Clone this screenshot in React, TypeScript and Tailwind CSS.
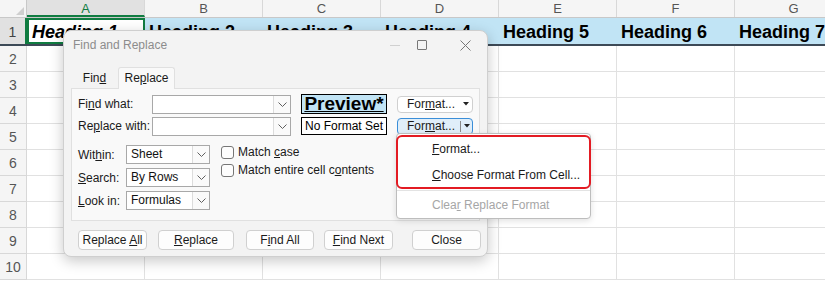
import React from "react";

const cols = ["A", "B", "C", "D", "E", "F", "G"];
const rows = [2, 3, 4, 5, 6, 7, 8, 9, 10];

const ui = { fontFamily: '"Liberation Sans", Arial, sans-serif' };
const sheet = { fontFamily: '"Liberation Sans", Arial, sans-serif' };

function Chevron() {
  return (
    <svg width="9" height="5" viewBox="0 0 9 5" fill="none">
      <polyline points="0.5,0.5 4.5,4.5 8.5,0.5" stroke="#606060" strokeWidth="1" />
    </svg>
  );
}

function Caret() {
  return (
    <svg width="6" height="4" viewBox="0 0 6 4">
      <polygon points="0,0 6,0 3,3.5" fill="#222" />
    </svg>
  );
}

function Combo({ w, value }: { w: string; value?: string }) {
  return (
    <div className={`${w} h-[19px] shrink-0 flex bg-white border border-[#a8a8a8]`}>
      <span className="flex-1 pl-[4px] text-[12px] leading-[17px] text-[#111] whitespace-nowrap">{value}</span>
      <div className="w-[17px] flex items-center justify-center border-l border-[#dcdcdc] bg-[#fafafa]">
        <Chevron />
      </div>
    </div>
  );
}

function Check({ children }: { children: React.ReactNode }) {
  return (
    <div className="flex items-center gap-[4px] h-[18px]">
      <div className="w-[13px] h-[13px] rounded-[3px] border border-[#767676] bg-[#fdfdfd]" />
      <span className="text-[12px] text-[#1a1a1a] whitespace-nowrap">{children}</span>
    </div>
  );
}

function Btn({ ml, w, children }: { ml: string; w: string; children: React.ReactNode }) {
  return (
    <div
      className={`${ml} ${w} h-[20px] flex items-center justify-center rounded-[4px] border border-[#d0d0d0] bg-[#fdfdfd] text-[12px] text-[#1a1a1a]`}
    >
      <span className="whitespace-nowrap">{children}</span>
    </div>
  );
}

export default function App() {
  return (
    <div className="relative w-[825px] h-[283px] overflow-hidden bg-white" style={ui}>
      {/* SHEET */}
      <div className="flex flex-col" style={sheet}>
        <div className="flex h-[18px] bg-[#f5f5f5] border-b border-[#c8c8c8]">
          <div className="w-[27px] shrink-0 border-r border-[#c8c8c8] flex items-end justify-end pr-[2px] pb-[2px]">
            <svg width="8" height="8" viewBox="0 0 8 8">
              <polygon points="8,0 8,8 0,8" fill="#cfcfcf" />
            </svg>
          </div>
          {cols.map((c) => (
            <div
              key={c}
              className={`w-[118px] shrink-0 border-r border-[#d8d8d8] text-center text-[13px] leading-[18px] ${
                c === "A" ? "bg-[#e1e1e1] text-[#107c41] border-b-2 border-b-[#107c41]" : "text-[#555]"
              }`}
            >
              {c}
            </div>
          ))}
        </div>

        {/* row 1 */}
        <div className="flex h-[28px] border-b-2 border-[#3d4a57]">
          <div className="w-[27px] shrink-0 bg-[#e1e1e1] border-r-2 border-[#107c41] text-center text-[14px] leading-[28px] text-[#444]">
            1
          </div>
          <div className="w-[118px] shrink-0 bg-white border-2 border-[#107c41] pl-[3px] text-[18px] font-bold italic leading-[24px] text-black">
            Heading 1
          </div>
          {[2, 3, 4, 5, 6, 7].map((n) => (
            <div
              key={n}
              className="w-[118px] shrink-0 bg-[#c1e4f5] pl-[4px] text-[18px] font-bold leading-[28px] whitespace-nowrap overflow-hidden text-black"
            >
              Heading {n}
            </div>
          ))}
        </div>

        {rows.map((r) => (
          <div key={r} className="flex h-[26px]">
            <div className="w-[27px] shrink-0 bg-[#f5f5f5] border-r border-b border-[#d8d8d8] text-center text-[14px] leading-[26px] text-[#555]">
              {r}
            </div>
            {cols.map((c) => (
              <div key={c} className="w-[118px] shrink-0 border-r border-b border-[#e1e1e1]" />
            ))}
          </div>
        ))}
      </div>

      {/* DIALOG */}
      <div className="absolute left-[63px] top-[30px] w-[425px] h-[227px] flex flex-col rounded-[8px] bg-[#f3f3f3] border border-[#cfcfcf] shadow-[0_4px_14px_rgba(0,0,0,0.22)]">
        <div className="h-[35px] flex items-start">
          <span className="pl-[9px] pt-[5px] text-[12px] text-[#8c8c8c]">Find and Replace</span>
          <div className="ml-auto flex items-center h-[28px] pr-[16px]">
            <div className="w-[10px] h-px bg-[#d0d0d0]" />
            <div className="ml-[17px] w-[10px] h-[10px] border border-[#777] rounded-[1px]" />
            <svg className="ml-[33px]" width="11" height="11" viewBox="0 0 11 11">
              <path d="M0.5 0.5 L10.5 10.5 M10.5 0.5 L0.5 10.5" stroke="#777" strokeWidth="1" />
            </svg>
          </div>
        </div>

        {/* tabs */}
        <div className="h-[22px] flex items-end pl-[7px]">
          <div className="w-[47px] h-[19px] text-center text-[12px] leading-[18px] text-[#1a1a1a]">
            Fin<u>d</u>
          </div>
          <div className="relative -mb-px z-10 w-[57px] h-[22px] bg-[#f9f9f9] border border-b-0 border-[#e0e0e0] rounded-t-[3px] text-center text-[12px] leading-[20px] text-[#1a1a1a]">
            Re<u>p</u>lace
          </div>
        </div>

        {/* panel */}
        <div className="mx-[7px] h-[133px] bg-[#f9f9f9] border border-[#e0e0e0] px-[6px] pt-[5px]">
          <div className="flex flex-col gap-[2px]">
            <div className="flex items-center h-[20px]">
              <span className="w-[74px] shrink-0 whitespace-nowrap text-[12px] text-[#1a1a1a]">
                Fi<u>n</u>d what:
              </span>
              <Combo w="w-[139px]" />
              <div className="ml-[10px] w-[86px] h-[20px] shrink-0 bg-[#c1e4f5] border border-black flex items-center justify-center overflow-hidden">
                <span
                  className="text-[19px] font-bold leading-[18px] text-black underline underline-offset-[1px]"
                  style={sheet}
                >
                  Preview*
                </span>
              </div>
              <div className="ml-[10px] w-[76px] h-[17px] shrink-0 flex items-center rounded-[4px] border border-[#d0d0d0] bg-white text-[12px] text-[#1a1a1a]">
                <span className="flex-1 text-center pl-[4px] whitespace-nowrap">
                  For<u>m</u>at...
                </span>
                <span className="w-[12px] flex justify-center">
                  <Caret />
                </span>
              </div>
            </div>
            <div className="flex items-center h-[20px]">
              <span className="w-[74px] shrink-0 whitespace-nowrap text-[12px] text-[#1a1a1a]">
                Re<u>p</u>lace with:
              </span>
              <Combo w="w-[139px]" />
              <div className="ml-[10px] w-[86px] h-[18px] shrink-0 bg-white border border-black flex items-center justify-center text-[12px] text-black whitespace-nowrap">
                No Format Set
              </div>
              <div className="ml-[10px] w-[76px] h-[17px] shrink-0 flex items-center rounded-[4px] border border-[#3a8ed8] bg-[#e0eef9] text-[12px] text-[#1a1a1a]">
                <span className="flex-1 text-center pl-[4px] whitespace-nowrap">
                  For<u>m</u>at...
                </span>
                <span className="w-px h-[11px] bg-[#8a8a8a]" />
                <span className="w-[11px] flex justify-center">
                  <Caret />
                </span>
              </div>
            </div>
          </div>

          <div className="mt-[9px] flex">
            <div className="flex flex-col gap-[4px]">
              {[
                [<>Wit<u>h</u>in:</>, "Sheet"],
                [<><u>S</u>earch:</>, "By Rows"],
                [<><u>L</u>ook in:</>, "Formulas"],
              ].map(([label, val], i) => (
                <div key={i} className="flex items-center">
                  <span className="w-[48px] shrink-0 whitespace-nowrap text-[12px] text-[#1a1a1a]">{label}</span>
                  <Combo w="w-[84px]" value={val as string} />
                </div>
              ))}
            </div>
            <div className="ml-[11px] -mt-[2px] flex flex-col">
              <Check>
                Match <u>c</u>ase
              </Check>
              <Check>
                Match entire cell c<u>o</u>ntents
              </Check>
            </div>
          </div>
        </div>

        {/* buttons */}
        <div className="mt-[9px] flex">
          <Btn ml="ml-[14px]" w="w-[69px]">
            Replace <u>A</u>ll
          </Btn>
          <Btn ml="ml-[11px]" w="w-[76px]">
            <u>R</u>eplace
          </Btn>
          <Btn ml="ml-[12px]" w="w-[68px]">
            F<u>i</u>nd All
          </Btn>
          <Btn ml="ml-[10px]" w="w-[69px]">
            <u>F</u>ind Next
          </Btn>
          <Btn ml="ml-[19px]" w="w-[69px]">
            Close
          </Btn>
        </div>
      </div>

      {/* DROPDOWN MENU */}
      <div className="absolute left-[396px] top-[133px] w-[195px] h-[86px] flex flex-col bg-white border border-[#bdbdbd] rounded-[4px] shadow-[0_2px_6px_rgba(0,0,0,0.12)] pl-[35px] text-[12px]">
        <div className="h-[16px] mt-[7px] flex items-center text-[#1a1a1a]">
          <span className="whitespace-nowrap">
            <u>F</u>ormat...
          </span>
        </div>
        <div className="h-[16px] mt-[10px] flex items-center text-[#1a1a1a]">
          <span className="whitespace-nowrap">
            <u>C</u>hoose Format From Cell...
          </span>
        </div>
        <div className="-ml-[35px] mt-[7px] h-px bg-[#e3e3e3]" />
        <div className="h-[16px] mt-[6px] flex items-center text-[#a6a6a6]">
          <span className="whitespace-nowrap">
            Clea<u>r</u> Replace Format
          </span>
        </div>
      </div>
      <div className="absolute left-[396px] top-[135px] w-[195px] h-[54px] rounded-[6px] border-2 border-[#e31b23]" />
    </div>
  );
}
